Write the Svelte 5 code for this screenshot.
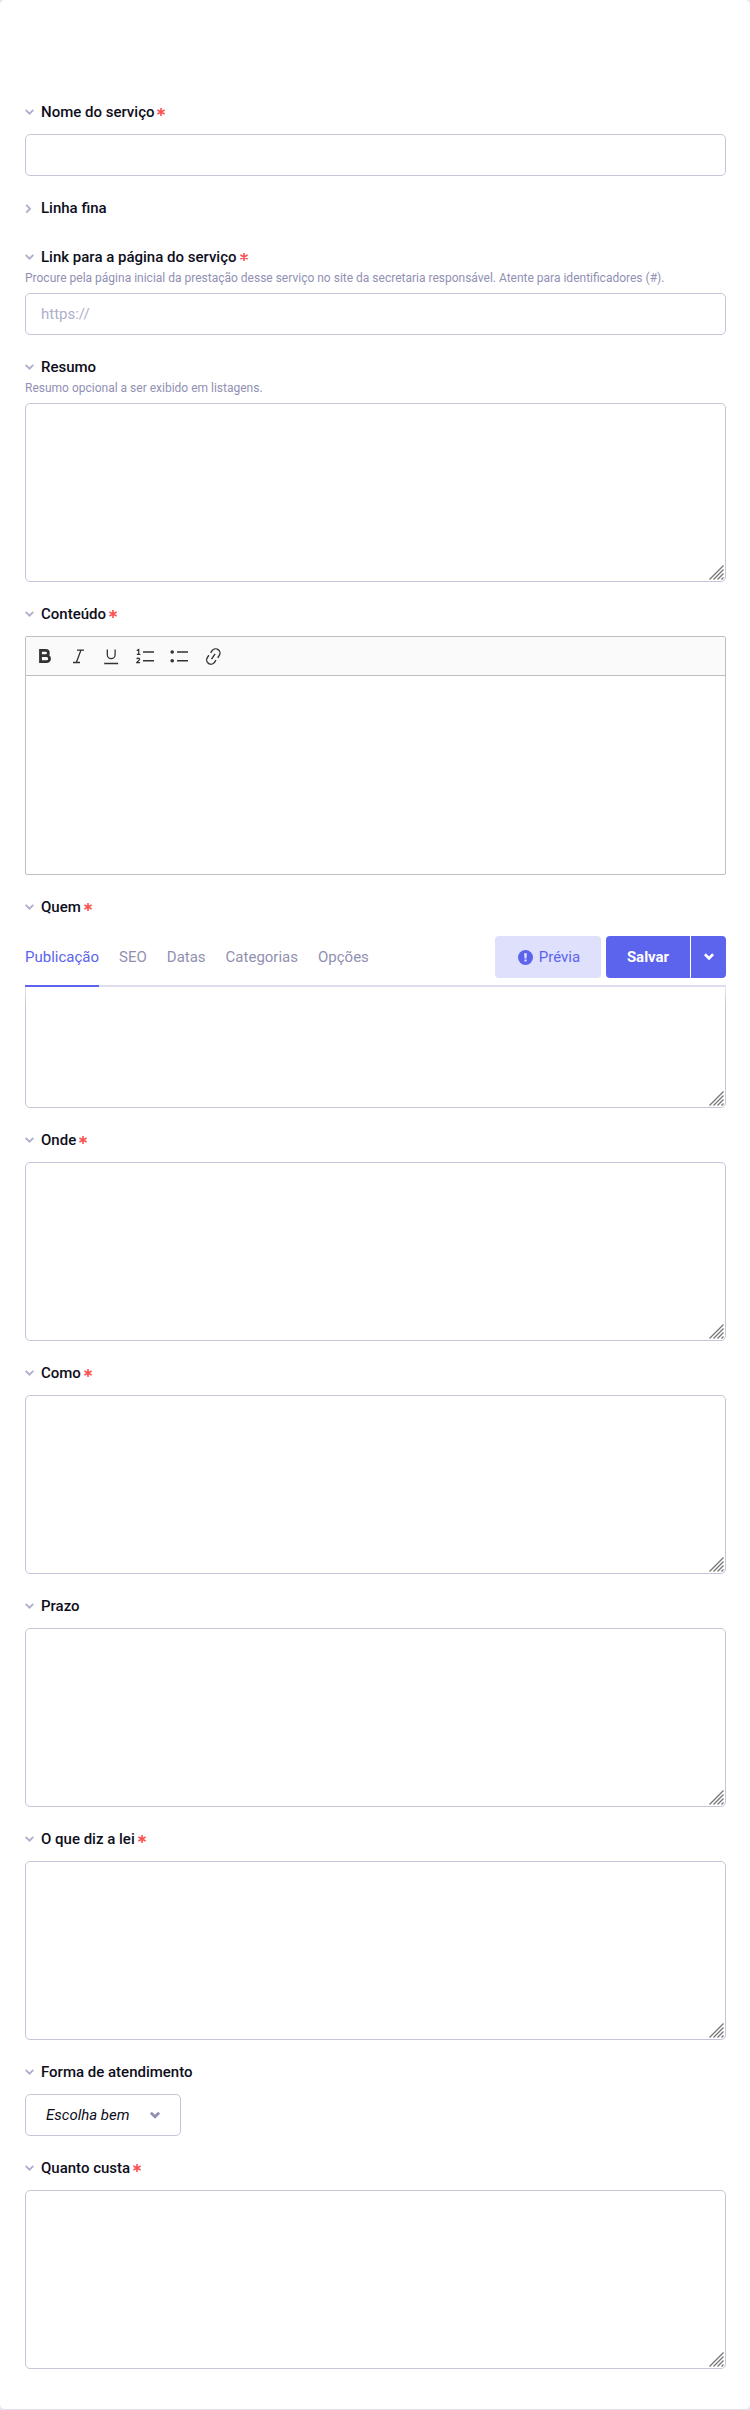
<script>
  const fields = [
    { title: 'Nome do serviço', required: true, kind: 'input' },
    { title: 'Linha fina', kind: 'collapsed' },
    {
      title: 'Link para a página do serviço',
      required: true,
      kind: 'input',
      placeholder: 'https://',
      help: 'Procure pela página inicial da prestação desse serviço no site da secretaria responsável. Atente para identificadores (#).'
    },
    { title: 'Resumo', kind: 'area', help: 'Resumo opcional a ser exibido em listagens.' },
    { title: 'Conteúdo', required: true, kind: 'editor' },
    { title: 'Quem', required: true, kind: 'area', underBar: true },
    { title: 'Onde', required: true, kind: 'area' },
    { title: 'Como', required: true, kind: 'area' },
    { title: 'Prazo', kind: 'area' },
    { title: 'O que diz a lei', required: true, kind: 'area' },
    { title: 'Forma de atendimento', kind: 'select' },
    { title: 'Quanto custa', required: true, kind: 'area' }
  ];
  const tabs = ['Publicação', 'SEO', 'Datas', 'Categorias', 'Opções'];
</script>

<main class="backdrop">
  <form class="panel">
    {#each fields as f}
      <section class="field" class:collapsed={f.kind === 'collapsed'}>
        <div class="title">
          <svg class="toggle" width="9" height="9" viewBox="0 0 9 9" fill="none" stroke="#afafcd" stroke-width="1.9">
            {#if f.kind === 'collapsed'}
              <path d="M1.2 .8 5 4.7 1.2 8.6" />
            {:else}
              <path d="M.6 1.8 4.5 5.7 8.4 1.8" />
            {/if}
          </svg>
          <span class="name">{f.title}</span>
          {#if f.required}
            <svg class="star" width="8" height="8" viewBox="0 0 8 8" stroke="#fb5252" stroke-width="1.6">
              <path d="M4 0v8M.4 2 7.6 6M.4 6 7.6 2" />
            </svg>
          {/if}
        </div>
        {#if f.help}<p class="help">{f.help}</p>{/if}

        {#if f.kind === 'input'}
          <input class="box" placeholder={f.placeholder ?? ''} />
        {:else if f.kind === 'area'}
          <div class="area">
            <textarea class="box"></textarea>
            <svg class="grip" width="15" height="15" viewBox="0 0 15 15" stroke="#747474" stroke-width="1.3">
              <path d="M.5 14.5 14.5 .5M4.5 14.5l10-10M8.5 14.5l6-6M12.5 14.5l2-2" />
            </svg>
          </div>
        {:else if f.kind === 'editor'}
          <div class="editor">
            <div class="tools">
              <svg width="186" height="20" viewBox="0 0 186 20" fill="none" stroke="#333" stroke-width="1.3">
                <path d="M4.5 4.4h5.2a2.6 2.6 0 0 1 0 5.3H4.5zM4.5 9.7h6.1a2.9 2.9 0 0 1 0 5.9H4.5z" stroke-width="2.8" />
                <path d="M41 4.1h7M37 16.5h7M45 4.1 40.3 16.5" />
                <path d="M71.3 3.5v5.2a3.9 3.9 0 0 0 7.8 0V3.5M68.2 17.5h14" />
                <path d="M107 6h11M107 14.7h11M141 6h11M141 14.7h11" stroke-width="1.5" />
                <path d="M100.8 4.6 102.7 3.6V8.3M100.8 8.3h3.6M100.8 13.2c.3-1.4 2.8-1.3 2.8 0 0 1.2-2.1 2-2.9 3.5h3.4" stroke-width="1.2" />
                <g fill="#333" stroke="none"><circle cx="136.2" cy="6" r="1.8" /><circle cx="136.2" cy="14.8" r="1.8" /></g>
                <g transform="rotate(-55 177.3 10.5)" stroke-width="1.4">
                  <path d="M175.8 14.8h-2.6a4.3 4.3 0 0 1 0-8.6h2.6M178.8 6.2h2.6a4.3 4.3 0 0 1 0 8.6h-2.6M174.2 10.5h6.2" />
                </g>
              </svg>
            </div>
            <div class="body" contenteditable="true"></div>
          </div>
        {:else if f.kind === 'select'}
          <button type="button" class="box select">
            <em>Escolha bem</em>
            <svg width="10" height="8" viewBox="0 0 10 8" fill="none" stroke="#9090b4" stroke-width="2.7"><path d="M.9 1.7 5 5.8 9.1 1.7" /></svg>
          </button>
        {/if}

        {#if f.underBar}
          <div class="bar">
            <nav>
              {#each tabs as t, i}<a href="#{i}" class:active={i === 0}>{t}</a>{/each}
            </nav>
            <div class="actions">
              <button type="button" class="preview">
                <svg width="15" height="15" viewBox="0 0 15 15"><circle cx="7.5" cy="7.5" r="7.5" fill="#5c63ed" /><path d="M6.1 3.2h2.8L8.5 8.6h-2zM6.4 9.6h2.2v2H6.4z" fill="#dfe0fc" /></svg>
                Prévia
              </button>
              <button type="button" class="save">Salvar</button>
              <button type="button" class="more" aria-label="Mais">
                <svg width="10" height="8" viewBox="0 0 10 8" fill="none" stroke="#fff" stroke-width="2.7"><path d="M.9 1.3 5 5.4 9.1 1.3" /></svg>
              </button>
            </div>
          </div>
        {/if}
      </section>
    {/each}
  </form>
</main>

<style>
  :global(body) { background: #e6e6f3; }
  .backdrop, .backdrop * { box-sizing: border-box; }
  .backdrop { font: 15px/20px Roboto, sans-serif; color: #0e0e1b; }
  .panel {
    height: 2410px;
    padding: 80px 24px 0 25px;
    background: #fff;
    border-bottom: 1px solid #dfdfef;
    border-radius: 5px;
  }
  .field { position: relative; padding-top: 22px; }
  .collapsed { height: 49px; }
  .title { display: flex; align-items: center; height: 20px; margin-bottom: 12px; font-weight: 500; }
  .toggle { margin-right: 7px; }
  .star { margin-left: 3px; }
  .help { margin: -12px 0 4px; padding-top: 3px; height: 22px; font-size: 12px; line-height: 16px; color: #9090b4; white-space: nowrap; }
  .box {
    display: block;
    width: 100%;
    height: 42px;
    margin: 0;
    padding: 0 15px;
    border: 1px solid #c6c4d8;
    border-radius: 5px;
    background: #fff;
    font: inherit;
    color: inherit;
    outline: none;
  }
  .box::placeholder { color: #afafcd; opacity: 1; }
  .area { position: relative; height: 179px; }
  textarea.box { height: 179px; resize: none; }
  .grip { position: absolute; right: 2px; bottom: 2px; }
  .editor { height: 239px; border: 1px solid #bfbfbf; border-radius: 2px; overflow: hidden; }
  .tools { display: flex; height: 39px; padding: 9px 0 0 10px; background: #fafafa; border-bottom: 1px solid #bfbfbf; }
  .body { height: 198px; outline: none; }
  .select { display: flex; align-items: center; justify-content: space-between; width: 156px; padding: 0 20px; }

  .bar {
    position: absolute;
    left: 0;
    right: 0;
    top: 50px;
    height: 62px;
    display: flex;
    justify-content: space-between;
    padding-top: 11px;
    background: #fff;
    border-bottom: 2px solid #dcdef0;
  }
  .bar::after {
    content: '';
    position: absolute;
    left: 0;
    right: 0;
    top: 62px;
    height: 20px;
    background: linear-gradient(#ffffff90, #ffffff00);
    pointer-events: none;
  }
  nav { display: flex; gap: 20px; }
  nav a { height: 51px; padding-top: 11px; color: #9090b0; text-decoration: none; }
  nav a.active { color: #5c63ed; border-bottom: 2px solid #5c63ed; }
  .actions { display: flex; height: 42px; }
  .actions button { display: flex; align-items: center; justify-content: center; border: 0; padding: 0; font: inherit; color: #fff; background: #5c63ed; }
  .actions .preview { width: 106px; gap: 6px; padding-left: 2px; margin-right: 5px; border-radius: 4px; background: #dfe0fc; color: #5c63ed; }
  .actions .save { width: 84px; margin-right: 1px; border-radius: 4px 0 0 4px; font-weight: 700; }
  .actions .more { width: 35px; border-radius: 0 4px 4px 0; }
</style>
